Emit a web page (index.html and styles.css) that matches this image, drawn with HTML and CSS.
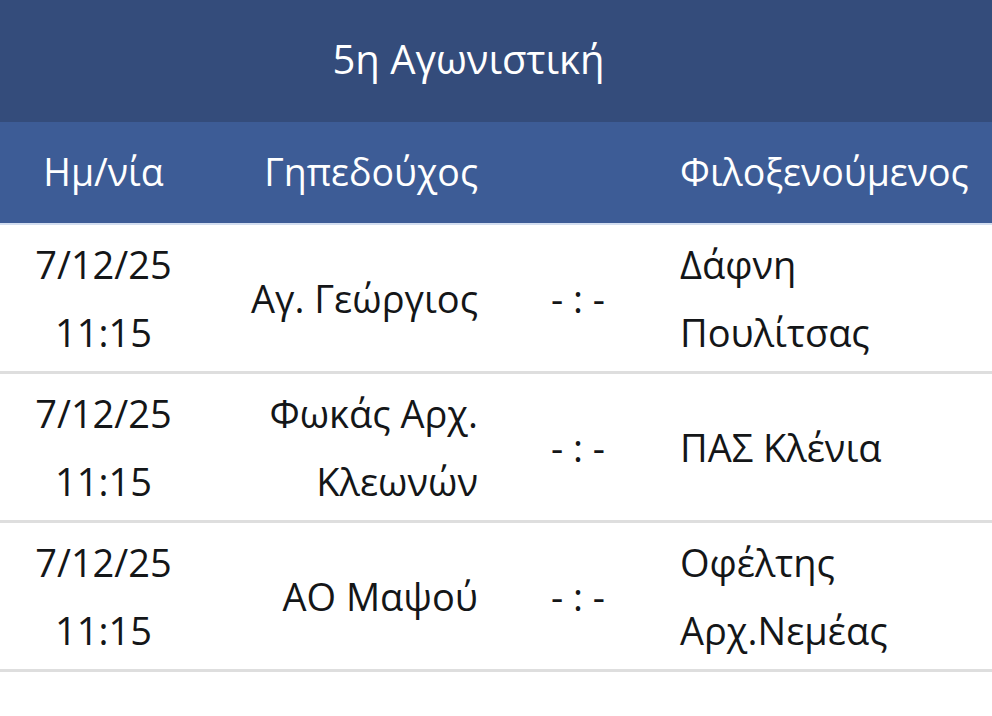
FILE: index.html
```html
<!DOCTYPE html>
<html lang="el">
<head>
<meta charset="utf-8">
<title>5η Αγωνιστική</title>
<link rel="stylesheet" href="styles.css">
</head>
<body>
<div class="fixtures">
  <div class="title">5η Αγωνιστική</div>
  <div class="row head">
    <div class="c-date">Ημ/νία</div>
    <div class="c-home">Γηπεδούχος</div>
    <div class="c-score"></div>
    <div class="c-away">Φιλοξενούμενος</div>
  </div>
  <div class="row match">
    <div class="c-date">7/12/25<br>11:15</div>
    <div class="c-home">Αγ. Γεώργιος</div>
    <div class="c-score">- : -</div>
    <div class="c-away">Δάφνη<br>Πουλίτσας</div>
  </div>
  <div class="row match">
    <div class="c-date">7/12/25<br>11:15</div>
    <div class="c-home">Φωκάς Αρχ.<br>Κλεωνών</div>
    <div class="c-score">- : -</div>
    <div class="c-away">ΠΑΣ Κλένια</div>
  </div>
  <div class="row match">
    <div class="c-date">7/12/25<br>11:15</div>
    <div class="c-home">ΑΟ Μαψού</div>
    <div class="c-score">- : -</div>
    <div class="c-away">Οφέλτης<br>Αρχ.Νεμέας</div>
  </div>
</div>
</body>
</html>
```

FILE: styles.css
```css
html, body {
  margin: 0;
  padding: 0;
  background: #ffffff;
}
body {
  font-family: "Open Sans", "Noto Sans", sans-serif;
  color: #141618;
}
.fixtures {
  width: 992px;
}
.title {
  background: #344c7b;
  color: #ffffff;
  height: 122px;
  display: flex;
  align-items: center;
  justify-content: center;
  padding-right: 55px;
  font-size: 40px;
  padding-bottom: 6px;
  box-sizing: border-box;
}
.row {
  display: grid;
  grid-template-columns: 207px 293px 156px 1fr;
  align-items: center;
}
.head {
  background: #3d5c96;
  color: #ffffff;
  height: 103px;
  font-size: 37.5px;
  border-bottom: 2px solid #d3def0;
  box-sizing: border-box;
  padding-bottom: 2px;
}
.match {
  font-size: 38px;
  line-height: 68px;
  padding: 5px 0 5px;
  border-bottom: 3px solid #dedede;
}
.c-date {
  text-align: center;
}
.c-home {
  text-align: right;
  padding-right: 22px;
}
.c-score {
  text-align: center;
}
.c-away {
  text-align: left;
  padding-left: 24px;
}
```
